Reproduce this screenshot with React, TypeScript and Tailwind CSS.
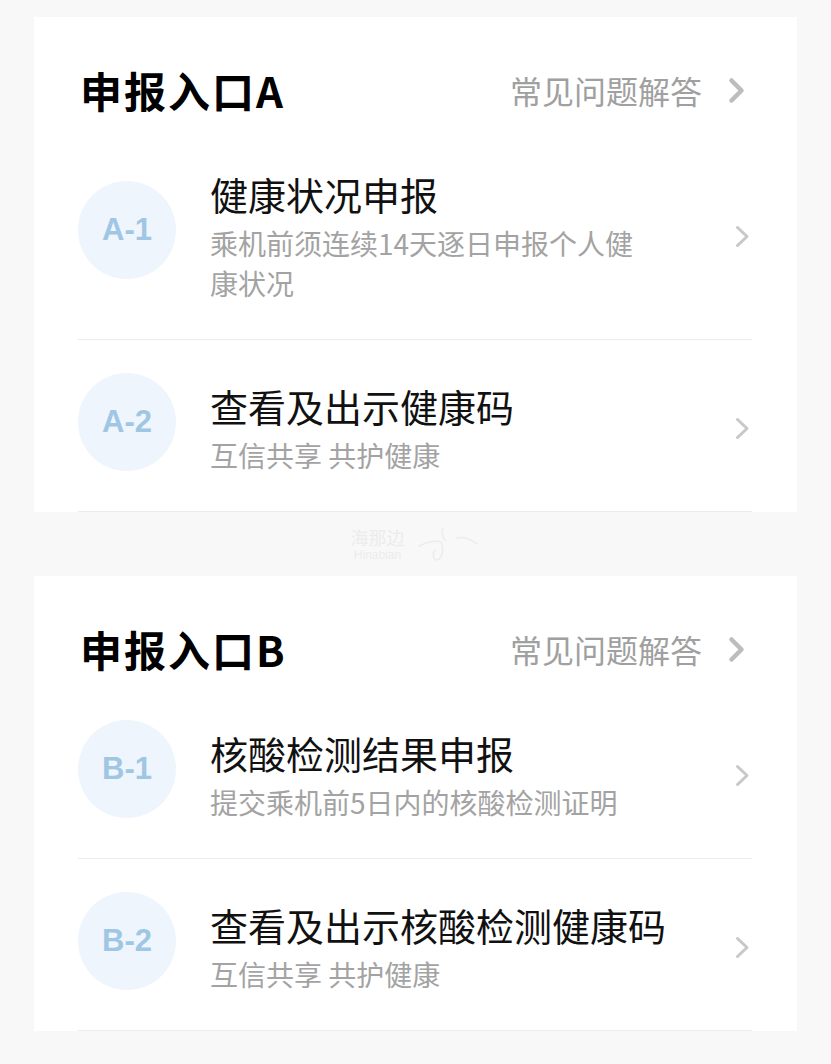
import React from 'react';

type Entry = {
  code: string;
  title: string;
  desc: string;
};

const sections: { name: string; items: Entry[] }[] = [
  {
    name: '申报入口A',
    items: [
      { code: 'A-1', title: '健康状况申报', desc: '乘机前须连续14天逐日申报个人健康状况' },
      { code: 'A-2', title: '查看及出示健康码', desc: '互信共享 共护健康' },
    ],
  },
  {
    name: '申报入口B',
    items: [
      { code: 'B-1', title: '核酸检测结果申报', desc: '提交乘机前5日内的核酸检测证明' },
      { code: 'B-2', title: '查看及出示核酸检测健康码', desc: '互信共享 共护健康' },
    ],
  },
];

const cjk = { fontFamily: '"Noto Sans CJK SC", "Noto Sans", sans-serif' };
const latin = { fontFamily: '"Liberation Sans", "Noto Sans CJK SC", sans-serif' };

const HeaderChevron = () => (
  <svg width="17" height="27" viewBox="0 0 17 27" fill="none">
    <path d="M3.5 3.5 L13.5 13.5 L3.5 23.5" stroke="#bdbdbd" strokeWidth="4.5" strokeLinecap="round" strokeLinejoin="round" />
  </svg>
);

const RowChevron = () => (
  <svg width="15" height="23" viewBox="0 0 15 23" fill="none">
    <path d="M2.5 2.5 L12 11.5 L2.5 20.5" stroke="#c8c8c8" strokeWidth="3" strokeLinecap="round" strokeLinejoin="round" />
  </svg>
);

const Row = ({ item }: { item: Entry }) => (
  <div className="flex items-center border-b border-[#ececec] pt-[41px] pb-[36px] cursor-pointer">
    {/* circle is a bit taller than two-line content, keep it from stretching the row */}
    <div className="w-[98px] h-[98px] -my-[4px] -translate-y-[6px] shrink-0 rounded-full bg-[#eef5fd] flex items-center justify-center">
      <span className="text-[31px] font-bold text-[#9fc7e3]" style={latin}>{item.code}</span>
    </div>
    <div className="ml-[34px] flex-1 flex flex-col gap-[4px]">
      <p className="text-[38px] leading-[50px] text-[#111] whitespace-nowrap" style={cjk}>{item.title}</p>
      <p className="max-w-[440px] text-[28px] leading-[40px] text-[#a3a3a3]" style={cjk}>{item.desc}</p>
    </div>
    <div className="shrink-0 mr-[2px]">
      <RowChevron />
    </div>
  </div>
);

export default function App() {
  return (
    <div className="min-h-screen bg-[#f8f8f8] pt-[17px] pb-[40px]">
      {sections.map((section, i) => (
        <React.Fragment key={section.name}>
          {i > 0 && (
            <div className="h-[64px] flex items-center justify-center gap-3 select-none">
              <div className="flex flex-col items-center gap-[3px]">
                <span className="text-[18px] leading-none text-[#ececec]" style={cjk}>海那边</span>
                <span className="text-[12px] leading-none text-[#ececec]" style={latin}>Hinabian</span>
              </div>
              <svg width="64" height="40" viewBox="0 0 64 40" fill="none">
                <path d="M2 22 C10 18 18 16 24 18 C27 24 26 34 20 36 C16 36 15 30 18 26 M26 4 C24 8 26 14 28 16 M40 14 C48 12 54 16 60 20" stroke="#ececec" strokeWidth="1.5" strokeLinecap="round" />
              </svg>
            </div>
          )}
          <div className="mx-[34px] bg-white pt-[50px] pl-[44px] pr-[45px]">
            <div className="flex items-center justify-between h-[46px] mb-[15px] pr-[7px]">
              <h2 className="pl-[2px] text-[42px] tracking-[2px] font-bold text-black leading-[46px]" style={cjk}>{section.name}</h2>
              <div className="flex items-center gap-[26px] cursor-pointer">
                <span className="text-[32px] text-[#a0a0a0]" style={cjk}>常见问题解答</span>
                <HeaderChevron />
              </div>
            </div>
            {section.items.map((item) => (
              <Row key={item.code} item={item} />
            ))}
          </div>
        </React.Fragment>
      ))}
    </div>
  );
}
